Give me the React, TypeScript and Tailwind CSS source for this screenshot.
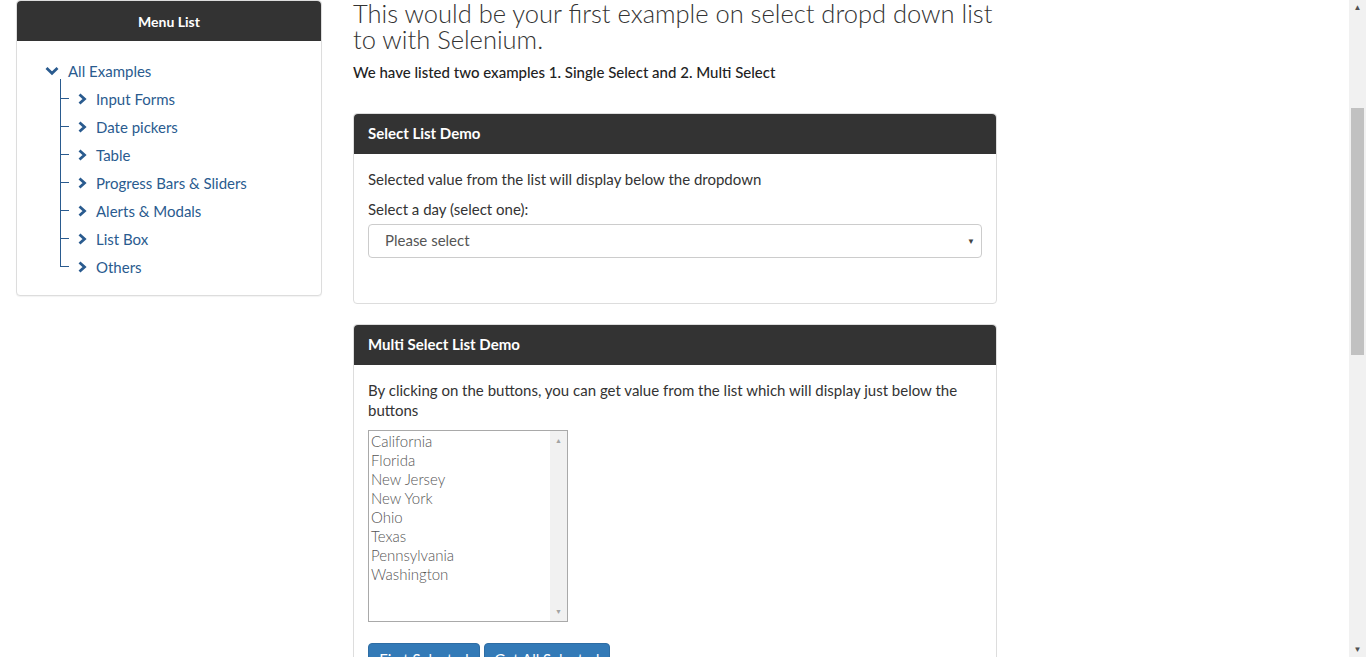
import React from 'react'

const menuItems = [
  'Input Forms',
  'Date pickers',
  'Table',
  'Progress Bars & Sliders',
  'Alerts & Modals',
  'List Box',
  'Others',
]

const states = ['California', 'Florida', 'New Jersey', 'New York', 'Ohio', 'Texas', 'Pennsylvania', 'Washington']

function ChevronRight() {
  return (
    <svg width="10" height="12" viewBox="0 0 10 12" className="shrink-0">
      <path d="M2.5 1.5 L7.5 6 L2.5 10.5" fill="none" stroke="#2a5b8f" strokeWidth="2.8" strokeLinejoin="miter" />
    </svg>
  )
}

function ChevronDown() {
  return (
    <svg width="14" height="10" viewBox="0 0 14 10" className="shrink-0">
      <path d="M1.5 2 L7 7.2 L12.5 2" fill="none" stroke="#2a5b8f" strokeWidth="2.8" />
    </svg>
  )
}

function Sidebar() {
  return (
    <div className="self-start w-[306px] rounded border border-[#dddddd] bg-white shadow-[0_1px_1px_rgba(0,0,0,0.05)]">
      <div className="h-[40px] flex items-center justify-center bg-[#333333] rounded-t text-white text-[14px] font-bold">
        Menu List
      </div>
      <div className="pt-[19px] pb-[14px] pl-[28px]">
        <div className="flex items-center h-[22px] gap-[9px] text-[#2a5b8f] text-[15px]">
          <ChevronDown />
          <span>All Examples</span>
        </div>
        <ul className="ml-[15px] mt-[3px]">
          {menuItems.map((item, i) => (
            <li key={item} className="relative flex items-center h-[28px] pl-[17px] text-[#2a5b8f] text-[15px]">
              <span
                className={
                  i === menuItems.length - 1
                    ? 'absolute left-0 top-[-6px] h-[20px] w-px bg-[#2a5b8f]'
                    : 'absolute left-0 top-[-6px] h-[34px] w-px bg-[#2a5b8f]'
                }
              />
              <span className="absolute left-0 top-[13px] w-[9px] h-px bg-[#2a5b8f]" />
              <ChevronRight />
              <span className="ml-[9px]">{item}</span>
            </li>
          ))}
        </ul>
      </div>
    </div>
  )
}

function Panel({ title, children, className }: { title: string; children: React.ReactNode; className?: string }) {
  return (
    <div className={'rounded border border-[#dddddd] bg-white ' + (className ?? '')}>
      <div className="h-[40px] flex items-center px-[14px] bg-[#333333] rounded-t text-white text-[15px] font-bold">
        {title}
      </div>
      <div className="px-[14px] pt-[15px]">{children}</div>
    </div>
  )
}

export default function App() {
  return (
    <div
      className="relative h-[657px] overflow-hidden bg-white text-[#333333]"
      style={{ fontFamily: 'Lato, "Open Sans", sans-serif' }}
    >
      <div className="flex gap-[31px] pl-[16px]">
        <Sidebar />
        <div className="w-[644px]">
          <h1 className="text-[25.5px] font-light leading-[26px] text-[#333333]">
            This would be your first example on select dropd down list to with Selenium.
          </h1>
          <p className="mt-[9px] text-[15px] font-medium text-[#222222]">
            We have listed two examples 1. Single Select and 2. Multi Select
          </p>
          <Panel title="Select List Demo" className="mt-[29px] h-[191px]">
            <p className="text-[15px] leading-[20px]">Selected value from the list will display below the dropdown</p>
            <p className="mt-[10px] text-[15px] leading-[20px]">Select a day (select one):</p>
            <div className="mt-[5px] h-[34px] rounded border border-[#cccccc] flex items-center justify-between pl-[16px] pr-[6px] text-[15px] text-[#555555]">
              <span>Please select</span>
              <span className="text-[8px] text-[#444444]">▼</span>
            </div>
          </Panel>
          <Panel title="Multi Select List Demo" className="mt-[20px] h-[400px]">
            <p className="text-[15px] leading-[20px]">
              By clicking on the buttons, you can get value from the list which will display just below the buttons
            </p>
            <div className="mt-[10px] w-[200px] h-[192px] border border-[#a9a9a9] flex">
              <ul className="flex-1 pt-[1px] pl-[2px] text-[15px] font-light leading-[19px] text-[#555555]">
                {states.map((s) => (
                  <li key={s}>{s}</li>
                ))}
              </ul>
              <div className="w-[17px] bg-[#f1f1f1] flex flex-col justify-between items-center py-[4px] text-[7px] text-[#a3a3a3]">
                <span>▲</span>
                <span>▼</span>
              </div>
            </div>
            <div className="mt-[21px] flex gap-[4px]">
              <button className="h-[34px] rounded border border-[#2e6da4] bg-[#337ab7] text-white text-[15px] whitespace-nowrap w-[112px]">
                First Selected
              </button>
              <button className="h-[34px] rounded border border-[#2e6da4] bg-[#337ab7] text-white text-[15px] whitespace-nowrap w-[126px]">
                Get All Selected
              </button>
            </div>
          </Panel>
        </div>
      </div>
      <div className="absolute right-0 top-0 w-[17px] h-[657px] bg-[#f1f1f1] flex flex-col items-center">
        <span className="mt-[3px] text-[8px] text-[#505050] leading-none">▲</span>
        <div className="mt-[97px] w-[13px] h-[247px] bg-[#c1c1c1]" />
        <span className="mt-auto mb-[4px] text-[8px] text-[#505050] leading-none">▼</span>
      </div>
    </div>
  )
}
